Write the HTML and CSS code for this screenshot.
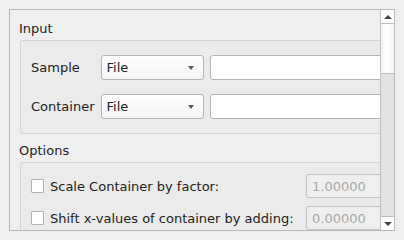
FILE: index.html
```html
<!DOCTYPE html>
<html>
<head>
<meta charset="utf-8">
<link rel="stylesheet" href="styles.css">
</head>
<body>
<div class="frame">
  <div class="viewport">
    <div class="content">
      <div class="title">Input</div>
      <div class="group input-grid">
        <span class="label">Sample</span>
        <div class="combo"><span>File</span><span class="arrow"></span></div>
        <div class="field"></div>
        <span class="label">Container</span>
        <div class="combo"><span>File</span><span class="arrow"></span></div>
        <div class="field"></div>
      </div>
      <div class="title title-options">Options</div>
      <div class="group options-grid">
        <span class="check"></span>
        <span class="label">Scale Container by factor:</span>
        <div class="spin">1.00000</div>
        <span class="check"></span>
        <span class="label">Shift x-values of container by adding:</span>
        <div class="spin">0.00000</div>
      </div>
    </div>
  </div>
  <div class="scrollbar">
    <div class="sb-btn sb-up"><span class="tri-up"></span></div>
    <div class="sb-handle"></div>
    <div class="sb-track"></div>
    <div class="sb-btn sb-down"><span class="tri-down"></span></div>
  </div>
</div>
</body>
</html>
```
FILE: styles.css
```css
html, body {
  margin: 0;
  padding: 0;
  background: #efefef;
}
body {
  font-family: "DejaVu Sans", sans-serif;
  font-size: 13px;
  line-height: 15px;
  color: #222;
  width: 404px;
  height: 240px;
  overflow: hidden;
}
.frame {
  box-sizing: border-box;
  margin: 9px 0 0 9px;
  width: 386px;
  height: 222px;
  border: 1px solid #b8b8b8;
  display: flex;
  background: #efefef;
}
.viewport {
  flex: 1;
  overflow: hidden;
  min-width: 0;
}
.content {
  width: 390px;
  padding-left: 9px;
}
.title {
  margin-top: 11px;
  height: 15px;
}
.title-options {
  margin-top: 9px;
}
.group {
  box-sizing: border-box;
  margin-top: 4px;
  margin-left: 1px;
  width: 380px;
  background: #ebebeb;
  border: 1px solid #d4d4d4;
  border-radius: 2px;
}
.input-grid {
  display: grid;
  grid-template-columns: auto 103px 1fr;
  column-gap: 6px;
  row-gap: 14px;
  padding: 14px 0 14px 10px;
  align-items: center;
}
.label {
  white-space: nowrap;
}
.combo {
  box-sizing: border-box;
  height: 25px;
  border: 1px solid #b4b4b4;
  border-radius: 3px;
  background: linear-gradient(#ffffff, #f4f4f4);
  display: flex;
  align-items: center;
  justify-content: space-between;
  padding: 0 9px 0 5px;
}
.arrow {
  width: 0;
  height: 0;
  border-left: 3.5px solid transparent;
  border-right: 3.5px solid transparent;
  border-top: 4px solid #5a5a5a;
  margin-top: 1px;
}
.field {
  box-sizing: border-box;
  height: 25px;
  border: 1px solid #b4b4b4;
  border-radius: 3px;
  background: #fff;
}
.options-grid {
  display: grid;
  grid-template-columns: 13px 250px 1fr;
  column-gap: 6px;
  row-gap: 8px;
  padding: 11px 0 10px 10px;
  align-items: center;
}
.check {
  box-sizing: border-box;
  width: 13px;
  height: 14px;
  border: 1px solid #b0b0b0;
  background: #fff;
  border-radius: 1px;
}
.spin {
  box-sizing: border-box;
  height: 24px;
  border: 1px solid #c4c4c4;
  border-radius: 3px;
  background: #efefef;
  color: #a8a8a8;
  padding-left: 5px;
  display: flex;
  align-items: center;
}
.scrollbar {
  box-sizing: border-box;
  width: 14px;
  border-left: 1px solid #c0c0c0;
  display: flex;
  flex-direction: column;
  background: #e3e3e3;
}
.sb-btn {
  box-sizing: border-box;
  height: 14px;
  background: #fff;
  display: flex;
  align-items: center;
  justify-content: center;
}
.sb-up {
  border-bottom: 1px solid #c0c0c0;
}
.sb-down {
  border-top: 1px solid #c0c0c0;
}
.tri-up {
  width: 0;
  height: 0;
  border-left: 4px solid transparent;
  border-right: 4px solid transparent;
  border-bottom: 4px solid #444;
}
.tri-down {
  width: 0;
  height: 0;
  border-left: 4px solid transparent;
  border-right: 4px solid transparent;
  border-top: 4px solid #444;
}
.sb-handle {
  box-sizing: border-box;
  height: 50px;
  border-bottom: 1px solid #c0c0c0;
  background: linear-gradient(to right, #f2f2f2, #ffffff 40%, #f4f4f4);
}
.sb-track {
  flex: 1;
}
```
